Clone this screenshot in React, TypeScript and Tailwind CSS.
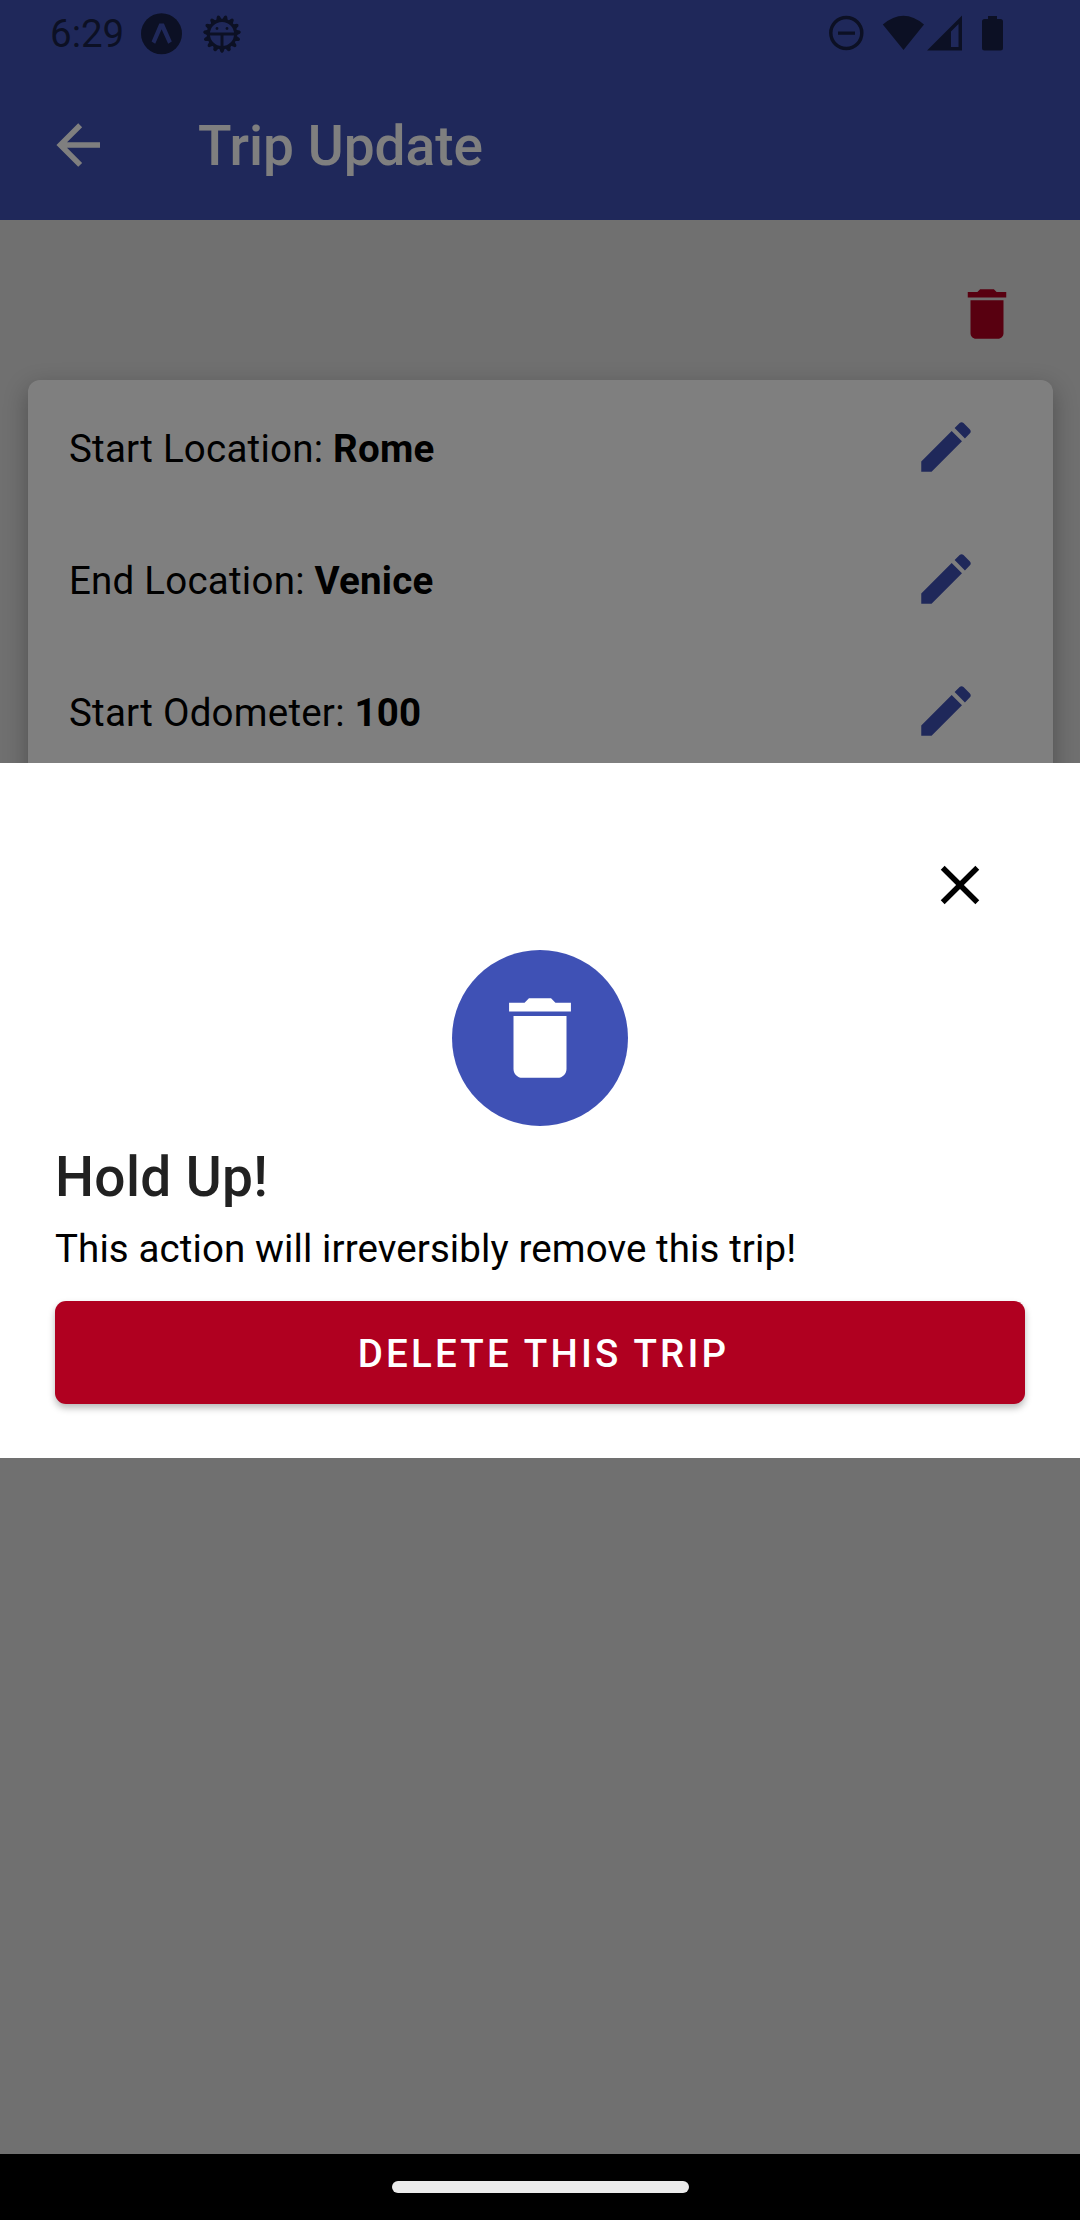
import React from "react";

const EDIT =
  "M3 17.25V21h3.75L17.81 9.94l-3.75-3.75L3 17.25zM20.71 7.04c.39-.39.39-1.02 0-1.41l-2.34-2.34c-.39-.39-1.02-.39-1.41 0l-1.83 1.83 3.75 3.75 1.83-1.83z";
const TRASH =
  "M6 19c0 1.1.9 2 2 2h8c1.1 0 2-.9 2-2V7H6v12zM19 4h-3.5l-1-1h-5l-1 1H5v2h14V4z";
const BACK =
  "M20,11V13H8L13.5,18.5L12.08,19.92L4.16,12L12.08,4.08L13.5,5.5L8,11H20Z";
const CLOSE =
  "M19,6.41L17.59,5L12,10.59L6.41,5L5,6.41L10.59,12L5,17.59L6.41,19L12,13.41L17.59,19L19,17.59L13.41,12L19,6.41Z";

function Icon({ d, className }: { d: string; className: string }) {
  return (
    <svg viewBox="0 0 24 24" fill="currentColor" className={className}>
      <path d={d} />
    </svg>
  );
}

const TEETH = Array.from({ length: 15 }, (_, i) => i * 24 + 180);

function StatusBar() {
  return (
    <div className="flex h-[66px] items-center pt-px pr-[76px] pl-[50px] text-[#182148]">
      <span className="w-[91px] text-[38.5px] leading-[66px]">6:29</span>
      <svg viewBox="0 0 42 42" className="h-[42px] w-[42px]">
        <circle cx="20.5" cy="20.700" r="20.5" fill="currentColor" />
        <path
          d="M18.300 10.500h4.600L30.800 28.500 27.200 30.700 20.600 16.200 14.200 30.700 10.600 28.500z"
          fill="#3f51b5"
        />
      </svg>
      <svg viewBox="0 0 40 40" className="ml-[19px] h-10 w-10">
        <g fill="currentColor">
          {TEETH.map((a) => (
            <path key={a} d="M16.800 7 18.400 2.200Q20 0 21.600 2.200L23.200 7z" transform={`rotate(${a} 20 20)`} />
          ))}
        </g>
        <circle cx="20" cy="20" r="13.700" fill="none" stroke="currentColor" strokeWidth="3.200" />
        <path d="M7 20H33M20 20V33" stroke="currentColor" strokeWidth="3" />
        <circle cx="15" cy="14.500" r="1.400" fill="currentColor" />
        <circle cx="25" cy="14.500" r="1.400" fill="currentColor" />
      </svg>
      <div className="flex-1" />
      <svg viewBox="0 0 176 40" className="h-10 w-[176px]" fill="currentColor">
        <circle cx="18.300" cy="19" r="15.500" fill="none" stroke="currentColor" strokeWidth="3.500" />
        <path d="M10 17.500h17v3.300H10z" />
        <path d="M54.800 10.500Q75.500-7 96 10.500L75.500 36z" />
        <path fillRule="evenodd" d="M99 36.500 134 1.500V36.500zM123 33h7.500V10L123 17.500z" />
        <path d="M160 2h9v3h3.500q2.500 0 2.500 2.500V34q0 2.500-2.500 2.500H156.500Q154 36.500 154 34V7.500Q154 5 156.500 5H160z" />
      </svg>
    </div>
  );
}

function TripRow({ label, value }: { label: string; value: string }) {
  return (
    <div className="flex h-[132px] items-center justify-between pr-[74px] pl-[41px] text-[38.5px] tracking-[0.23px] text-black">
      <span className="pt-1">
        {label} <b className="font-bold">{value}</b>
      </span>
      <Icon d={EDIT} className="h-[66px] w-[66px] text-[#3f51b5]" />
    </div>
  );
}

export default function App() {
  return (
    <div
      className="relative flex h-[2220px] w-[1080px] flex-col overflow-hidden bg-[#e0e0e0]"
      style={{ fontFamily: "Roboto, sans-serif" }}
    >
      <header className="h-[220px] bg-[#3f51b5]">
        <StatusBar />
        <div className="flex h-[154px] items-center pt-[3px] pl-[45px] text-white">
          <Icon d={BACK} className="h-[66px] w-[66px]" />
          <h1 className="ml-[87px] pt-[3px] text-[55px] leading-[66px] font-medium">Trip Update</h1>
        </div>
      </header>
      <div className="flex h-[160px] justify-end pt-[61px] pr-[60px]">
        <Icon d={TRASH} className="h-[66px] w-[66px] text-[#b00020]" />
      </div>
      <section className="mr-[27px] ml-[28px] h-[600px] rounded-[12px] bg-white pt-px shadow-[0_8px_24px_rgba(0,0,0,0.3)]">
        <TripRow label="Start Location:" value="Rome" />
        <TripRow label="End Location:" value="Venice" />
        <TripRow label="Start Odometer:" value="100" />
      </section>

      {/* Dimmed backdrop with the confirmation dialog */}
      <div className="absolute inset-x-0 top-0 flex h-[2154px] flex-col bg-black/50 pt-[763px]">
        <div className="flex h-[695px] flex-col bg-white px-[55px] pt-[89px]">
          <Icon d={CLOSE} className="mr-[32px] h-[66px] w-[66px] self-end text-black" />
          <div className="mt-[32px] flex h-[176px] w-[176px] items-center justify-center self-center rounded-full bg-[#3f51b5]">
            <Icon d={TRASH} className="h-[106px] w-[106px] text-white" />
          </div>
          <h2 className="mt-[10px] text-[55px] leading-[82px] font-medium tracking-[0.35px] text-[#212121]">Hold Up!</h2>
          <p className="mt-px text-[38.5px] leading-[60px] tracking-[0.1px] text-black">
            This action will irreversibly remove this trip!
          </p>
          <button className="mt-[22px] h-[103px] rounded-[11px] bg-[#b00020] pt-[3px] pl-[7px] text-[38.5px] font-medium tracking-[3.2px] text-white shadow-[0_4px_7px_rgba(0,0,0,0.28)]">
            DELETE THIS TRIP
          </button>
        </div>
      </div>

      <div className="absolute inset-x-0 bottom-0 flex h-[66px] justify-center bg-black pt-[27px]">
        <div className="h-[12px] w-[297px] rounded-full bg-[#ebebeb]" />
      </div>
    </div>
  );
}
